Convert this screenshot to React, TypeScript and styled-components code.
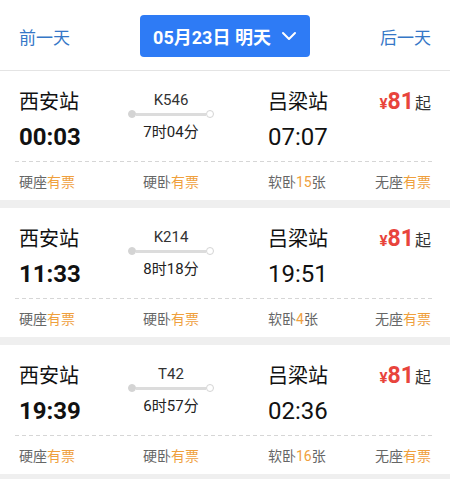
import React from 'react';
import styled, { createGlobalStyle } from 'styled-components';

interface Train {
  no: string;
  from: string;
  to: string;
  depart: string;
  arrive: string;
  duration: string;
  price: number;
  seats: { name: string; left: string }[];
}

const trains: Train[] = [
  {
    no: 'K546',
    from: '西安站',
    to: '吕梁站',
    depart: '00:03',
    arrive: '07:07',
    duration: '7时04分',
    price: 81,
    seats: [
      { name: '硬座', left: '有票' },
      { name: '硬卧', left: '有票' },
      { name: '软卧', left: '15' },
      { name: '无座', left: '有票' },
    ],
  },
  {
    no: 'K214',
    from: '西安站',
    to: '吕梁站',
    depart: '11:33',
    arrive: '19:51',
    duration: '8时18分',
    price: 81,
    seats: [
      { name: '硬座', left: '有票' },
      { name: '硬卧', left: '有票' },
      { name: '软卧', left: '4' },
      { name: '无座', left: '有票' },
    ],
  },
  {
    no: 'T42',
    from: '西安站',
    to: '吕梁站',
    depart: '19:39',
    arrive: '02:36',
    duration: '6时57分',
    price: 81,
    seats: [
      { name: '硬座', left: '有票' },
      { name: '硬卧', left: '有票' },
      { name: '软卧', left: '16' },
      { name: '无座', left: '有票' },
    ],
  },
];

const GlobalStyle = createGlobalStyle`
  html, body {
    margin: 0;
    padding: 0;
    background: #efefef;
    font-family: Roboto, "Noto Sans CJK SC", sans-serif;
  }
`;

const Page = styled.div`
  width: 450px;
  min-height: 479px;
  background: #efefef;
`;

const Header = styled.div`
  height: 70px;
  background: #fff;
  border-bottom: 1px solid #e4e4e4;
  display: flex;
  align-items: center;
  justify-content: space-between;
  padding: 0 19px;
`;

const DayLink = styled.span`
  font-size: 17px;
  color: #3577c7;
  padding-top: 3px;
`;

const DateButton = styled.div`
  width: 170px;
  height: 42px;
  box-sizing: border-box;
  background: #2e7bf5;
  border-radius: 4px;
  color: #fff;
  font-size: 18px;
  font-weight: 700;
  display: flex;
  align-items: center;
  justify-content: center;
  gap: 10px;
  margin-top: 1px;
`;

const List = styled.div`
  display: flex;
  flex-direction: column;
  gap: 8px;
`;

const Card = styled.div`
  background: #fff;
  padding: 18px 15px 8px;
`;

const TopGrid = styled.div`
  display: grid;
  grid-template-columns: 108px 88px 1fr auto;
  grid-template-rows: 26px 30px;
  row-gap: 7px;
  padding: 0 4px;
`;

const Station = styled.div<{ $pad?: boolean }>`
  font-size: 20px;
  line-height: 26px;
  color: #111;
  padding-left: ${(p) => (p.$pad ? '53px' : '0')};
`;

const Time = styled.div<{ $bold?: boolean; $pad?: boolean }>`
  grid-row: 2;
  grid-column: ${(p) => (p.$pad ? 3 : 1)};
  font-size: 24px;
  line-height: 30px;
  color: #111;
  font-weight: ${(p) => (p.$bold ? 700 : 400)};
  padding-left: ${(p) => (p.$pad ? '53px' : '0')};
`;

const Middle = styled.div`
  grid-column: 2;
  grid-row: 1 / span 2;
  display: flex;
  flex-direction: column;
  align-items: center;
  margin-top: 1px;
`;

const TrainNo = styled.div`
  font-size: 15px;
  line-height: 20px;
  color: #333;
`;

const Track = styled.div`
  width: 86px;
  height: 8px;
  display: flex;
  align-items: center;
`;

const TrackLine = styled.div`
  flex: 1;
  height: 3px;
  background: #dcdcdc;
`;

const Dot = styled.div<{ $hollow?: boolean }>`
  width: 8px;
  height: 8px;
  box-sizing: border-box;
  border-radius: 50%;
  background: ${(p) => (p.$hollow ? '#fff' : '#d4d4d4')};
  border: 1.5px solid #d4d4d4;
  flex-shrink: 0;
`;

const Duration = styled.div`
  font-size: 15px;
  line-height: 20px;
  color: #222;
  margin-top: 4px;
`;

const Price = styled.div`
  grid-column: 4;
  grid-row: 1;
  justify-self: end;
  display: flex;
  align-items: baseline;
  color: #e8443c;
  font-weight: 700;
  line-height: 26px;
`;

const Yen = styled.span`
  font-size: 15px;
`;

const Amount = styled.span`
  font-size: 23px;
`;

const Suffix = styled.span`
  font-size: 16px;
  font-weight: 400;
  color: #333;
  margin-left: 1px;
`;

const Divider = styled.div`
  margin-top: 9px;
  height: 1px;
  background: repeating-linear-gradient(to right, #d6d6d6 0 4px, transparent 4px 7px);
`;

const SeatGrid = styled.div`
  display: grid;
  grid-template-columns: 108px 88px 1fr auto;
  padding: 0 4px;
  margin-top: 10px;
`;

const Seat = styled.div<{ $align: 'start' | 'center' | 'end'; $pad?: boolean }>`
  font-size: 14px;
  line-height: 20px;
  color: #666;
  white-space: nowrap;
  justify-self: ${(p) => p.$align};
  padding-left: ${(p) => (p.$pad ? '53px' : '0')};
`;

const Avail = styled.span`
  color: #efa03d;
`;

const Chevron = () => (
  <svg width="16" height="10" viewBox="0 0 16 10" fill="none">
    <path d="M2 2l6 6 6-6" stroke="#fff" strokeWidth="2" strokeLinecap="round" strokeLinejoin="round" />
  </svg>
);

const SeatCell: React.FC<{ name: string; left: string; idx: number }> = ({ name, left, idx }) => {
  const align = idx === 0 ? 'start' : idx === 1 ? 'center' : idx === 2 ? 'start' : 'end';
  const isCount = /^\d+$/.test(left);
  return (
    <Seat $align={align} $pad={idx === 2}>
      {name}
      <Avail>{left}</Avail>
      {isCount ? '张' : ''}
    </Seat>
  );
};

const TrainCard: React.FC<{ t: Train }> = ({ t }) => (
  <Card>
    <TopGrid>
      <Station>{t.from}</Station>
      <Middle>
        <TrainNo>{t.no}</TrainNo>
        <Track>
          <Dot />
          <TrackLine />
          <Dot $hollow />
        </Track>
        <Duration>{t.duration}</Duration>
      </Middle>
      <Station $pad>{t.to}</Station>
      <Price>
        <Yen>¥</Yen>
        <Amount>{t.price}</Amount>
        <Suffix>起</Suffix>
      </Price>
      <Time $bold>{t.depart}</Time>
      <Time $pad>{t.arrive}</Time>
    </TopGrid>
    <Divider />
    <SeatGrid>
      {t.seats.map((s, i) => (
        <SeatCell key={s.name} name={s.name} left={s.left} idx={i} />
      ))}
    </SeatGrid>
  </Card>
);

export default function App() {
  return (
    <Page>
      <GlobalStyle />
      <Header>
        <DayLink>前一天</DayLink>
        <DateButton>
          <span>05月23日 明天</span>
          <Chevron />
        </DateButton>
        <DayLink>后一天</DayLink>
      </Header>
      <List>
        {trains.map((t) => (
          <TrainCard key={t.no} t={t} />
        ))}
      </List>
    </Page>
  );
}
